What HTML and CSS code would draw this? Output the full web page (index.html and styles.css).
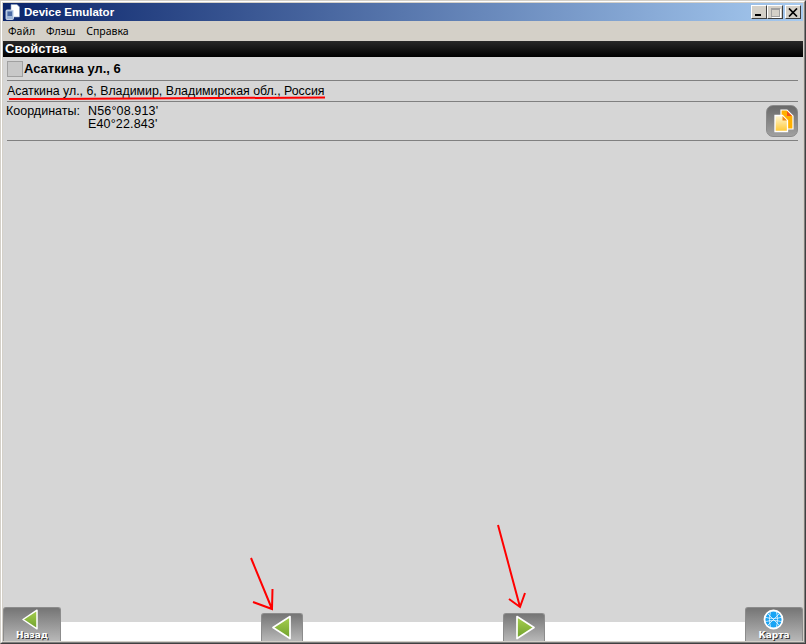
FILE: index.html
```html
<!DOCTYPE html>
<html lang="ru">
<head>
<meta charset="utf-8">
<title>Device Emulator</title>
<link rel="stylesheet" href="styles.css">
</head>
<body>
<div class="frame-outer">
<div class="frame-inner">
  <div class="titlebar">
    <svg class="app-icon" width="16" height="16" viewBox="0 0 16 16">
      <path d="M6 0.5h6l2.5 2.5v10H6z" fill="#fff" stroke="#8a9fc0" stroke-width=".6"/>
      <rect x="1" y="6" width="7.5" height="9.5" rx="1" fill="#9fb6d8" stroke="#dfe8f5" stroke-width=".8"/>
      <rect x="2.5" y="7.5" width="4.5" height="4.5" fill="#4a6aa5"/>
    </svg>
    <span class="title-text">Device Emulator</span>
    <div class="caption-buttons">
      <div class="cap-btn"><span class="glyph-min"></span></div>
      <div class="cap-btn cap-btn-disabled"><span class="glyph-max"></span></div>
      <div class="cap-btn cap-btn-close">
        <svg width="10" height="9" viewBox="0 0 10 9"><path d="M1 0.5l8 8M9 0.5l-8 8" stroke="#000" stroke-width="1.7" fill="none"/></svg>
      </div>
    </div>
  </div>
  <div class="menubar">
    <span>Файл</span><span>Флэш</span><span>Справка</span>
  </div>
  <div class="screen">
    <div class="header">Свойства</div>
    <div class="content">
      <div class="row row-name">
        <span class="swatch"></span>
        <span class="name">Асаткина ул., 6</span>
      </div>
      <div class="row row-address">Асаткина ул., 6, Владимир, Владимирская обл., Россия</div>
      <div class="row row-coords">
        <span class="coord-label">Координаты:</span>
        <span class="coord-values">N56°08.913'<br>E40°22.843'</span>
        <button class="copy-btn" aria-label="copy">
          <svg width="26" height="26" viewBox="0 0 26 26">
            <defs>
              <linearGradient id="pg" x1="0" y1="0" x2="0" y2="1"><stop offset="0" stop-color="#fff8d8"/><stop offset="1" stop-color="#ffc832"/></linearGradient>
            </defs>
            <path d="M12 2h6l6 6v13H12z" fill="#ffb000" stroke="#fff" stroke-width="1.2"/>
            <path d="M18 3v5h5z" fill="#f4501a"/>
            <path d="M6 7.500h7.500l5 5v11H6z" fill="url(#pg)" stroke="#fff" stroke-width="1.300"/>
            <path d="M13.500 8v4.500H18z" fill="#f08a10"/>
          </svg>
        </button>
      </div>
    </div>
    <div class="footer">
      <button class="nav-btn nav-btn-large">
        <svg class="shift-left-large" width="18" height="21" viewBox="0 0 18 21">
          <defs><linearGradient id="gr" x1="0" y1="0" x2="0" y2="1"><stop offset="0" stop-color="#a8d050"/><stop offset="1" stop-color="#6fa02c"/></linearGradient></defs>
          <path d="M16 1.200L2 10.500l14 9.300z" fill="url(#gr)" stroke="#fff" stroke-width="1.500" stroke-linejoin="round"/>
        </svg>
        <span class="nav-label">Назад</span>
      </button>
      <button class="nav-btn nav-btn-small">
        <svg class="shift-left-small" width="22" height="25" viewBox="0 0 22 25"><path d="M20 1.500L3 12.500l17 11z" fill="url(#gr)" stroke="#fff" stroke-width="1.700" stroke-linejoin="round"/></svg>
      </button>
      <button class="nav-btn nav-btn-small">
        <svg class="shift-right-small" width="22" height="25" viewBox="0 0 22 25"><path d="M2 1.500L19 12.500 2 23.500z" fill="url(#gr)" stroke="#fff" stroke-width="1.700" stroke-linejoin="round"/></svg>
      </button>
      <button class="nav-btn nav-btn-large">
        <svg class="shift-left-globe" width="21" height="21" viewBox="0 0 21 21">
          <circle cx="10.500" cy="10.500" r="9" fill="#18a4f4" stroke="#fff" stroke-width="1.800"/>
          <path d="M4 4l13 13M17 4L4 17M1.500 8c6 2 12 2 18 0M1.500 13c6-2 12-2 18 0M8 1.500c-2 6-2 12 0 18M13 1.500c2 6 2 12 0 18" stroke="#e8f6ff" stroke-width=".8" fill="none"/>
        </svg>
        <span class="nav-label">Карта</span>
      </button>
    </div>
  </div>
</div>
</div>
<svg class="annotations" width="806" height="644" viewBox="0 0 806 644">
  <g fill="none" stroke="#f00" stroke-width="2">
    <path d="M9 99C100 99 180 98.500 325 97.500"/>
    <path d="M251 558L272 609M272.500 589L272 609L253 602"/>
    <path d="M498 525L520 607M525 593L520 607L509 599"/>
  </g>
</svg>
</body>
</html>
```
FILE: styles.css
```css
* { box-sizing: border-box; }
html, body { margin: 0; padding: 0; }
body {
  width: 806px;
  height: 644px;
  position: relative;
  overflow: hidden;
  font-family: "Liberation Sans", sans-serif;
  font-size: 11px;
  color: #000;
}
.frame-outer {
  width: 806px;
  height: 644px;
  border: 1px solid;
  border-color: #d4d0c8 #404040 #404040 #d4d0c8;
}
.frame-inner {
  height: 100%;
  display: flex;
  flex-direction: column;
  padding: 1px;
  background: #d4d0c8;
  border: 1px solid;
  border-color: #fff #808080 #808080 #fff;
}
.titlebar {
  height: 18px;
  flex: none;
  display: flex;
  align-items: center;
  padding: 0 2px 0 2px;
  background: linear-gradient(90deg, #0a246a, #a6caf0);
  color: #fff;
}
.app-icon { flex: none; margin-right: 3px; }
.title-text { font-weight: bold; font-size: 11.5px; }
.caption-buttons { margin-left: auto; display: flex; }
.cap-btn {
  width: 16px;
  height: 14px;
  display: flex;
  align-items: center;
  justify-content: center;
  background: #d4d0c8;
  border: 1px solid;
  border-color: #fff #404040 #404040 #fff;
}
.cap-btn-close { margin-left: 2px; }
.glyph-min { width: 6px; height: 2px; background: #000; margin-top: 6px; margin-right: 2px; }
.glyph-max { width: 9px; height: 9px; border: 1px solid #a0a0a0; border-top-width: 2px; box-shadow: 1px 1px 0 #fff; }
.menubar {
  height: 20px;
  flex: none;
  display: flex;
  align-items: center;
  gap: 11px;
  padding-left: 5px;
  font-family: "Noto Sans", sans-serif;
  font-size: 10.5px;
}
.screen {
  flex: 1;
  display: flex;
  flex-direction: column;
  background: #d6d6d6;
}
.header {
  height: 16px;
  flex: none;
  padding-left: 2px;
  background: linear-gradient(#282828, #000);
  color: #fff;
  font-weight: bold;
  font-size: 13px;
  line-height: 16px;
}
.content { flex: 1; padding: 0 5px 0 4px; }
.row { border-bottom: 1px solid #808080; }
.row-name {
  height: 24px;
  display: flex;
  align-items: center;
  gap: 1px;
}
.swatch {
  width: 16px;
  height: 16px;
  background: #c8c8c8;
  border: 1px solid #a0a0a0;
}
.name { font-weight: bold; font-size: 13px; }
.row-address {
  height: 21px;
  line-height: 20px;
  font-size: 12.35px;
}
.row-coords {
  height: 39px;
  display: flex;
  align-items: flex-start;
  padding-top: 3px;
  font-size: 12.5px;
  line-height: 13px;
}
.coord-label { width: 81px; flex: none; margin-left: -1px; margin-right: 1px; }
.coord-values { letter-spacing: 0.15px; }
.copy-btn {
  margin-left: auto;
  width: 32px;
  height: 32px;
  padding: 0;
  display: flex;
  align-items: center;
  justify-content: center;
  border: 1px solid #8a8a8a;
  border-radius: 7px;
  background: linear-gradient(#6a6a6a, #a0a0a0);
}
.footer {
  height: 34px;
  flex: none;
  display: flex;
  justify-content: space-between;
  align-items: flex-end;
  background: linear-gradient(transparent 15px, #fff 15px);
}
.nav-btn {
  padding: 0;
  display: flex;
  flex-direction: column;
  align-items: center;
  border: 1px solid #8c8c8c;
  border-bottom: 0;
  border-radius: 3px 3px 0 0;
  background: linear-gradient(#757575, #b8b8b8);
}
.nav-btn-large { width: 58px; height: 34px; padding-top: 1px; }
.nav-btn-small { width: 42px; height: 28px; padding-top: 1px; }
.shift-left-large { margin-right: 4px; }
.shift-left-small { margin-right: 2px; }
.shift-right-small { margin-left: 4px; }
.shift-left-globe { margin-right: 2px; }
.nav-label {
  color: #fff;
  font-weight: bold;
  font-size: 9px;
  line-height: 10px;
  font-family: "DejaVu Sans", sans-serif;
  text-shadow: 1px 1px 0 #333;
}
.annotations { position: absolute; left: 0; top: 0; pointer-events: none; }
```
